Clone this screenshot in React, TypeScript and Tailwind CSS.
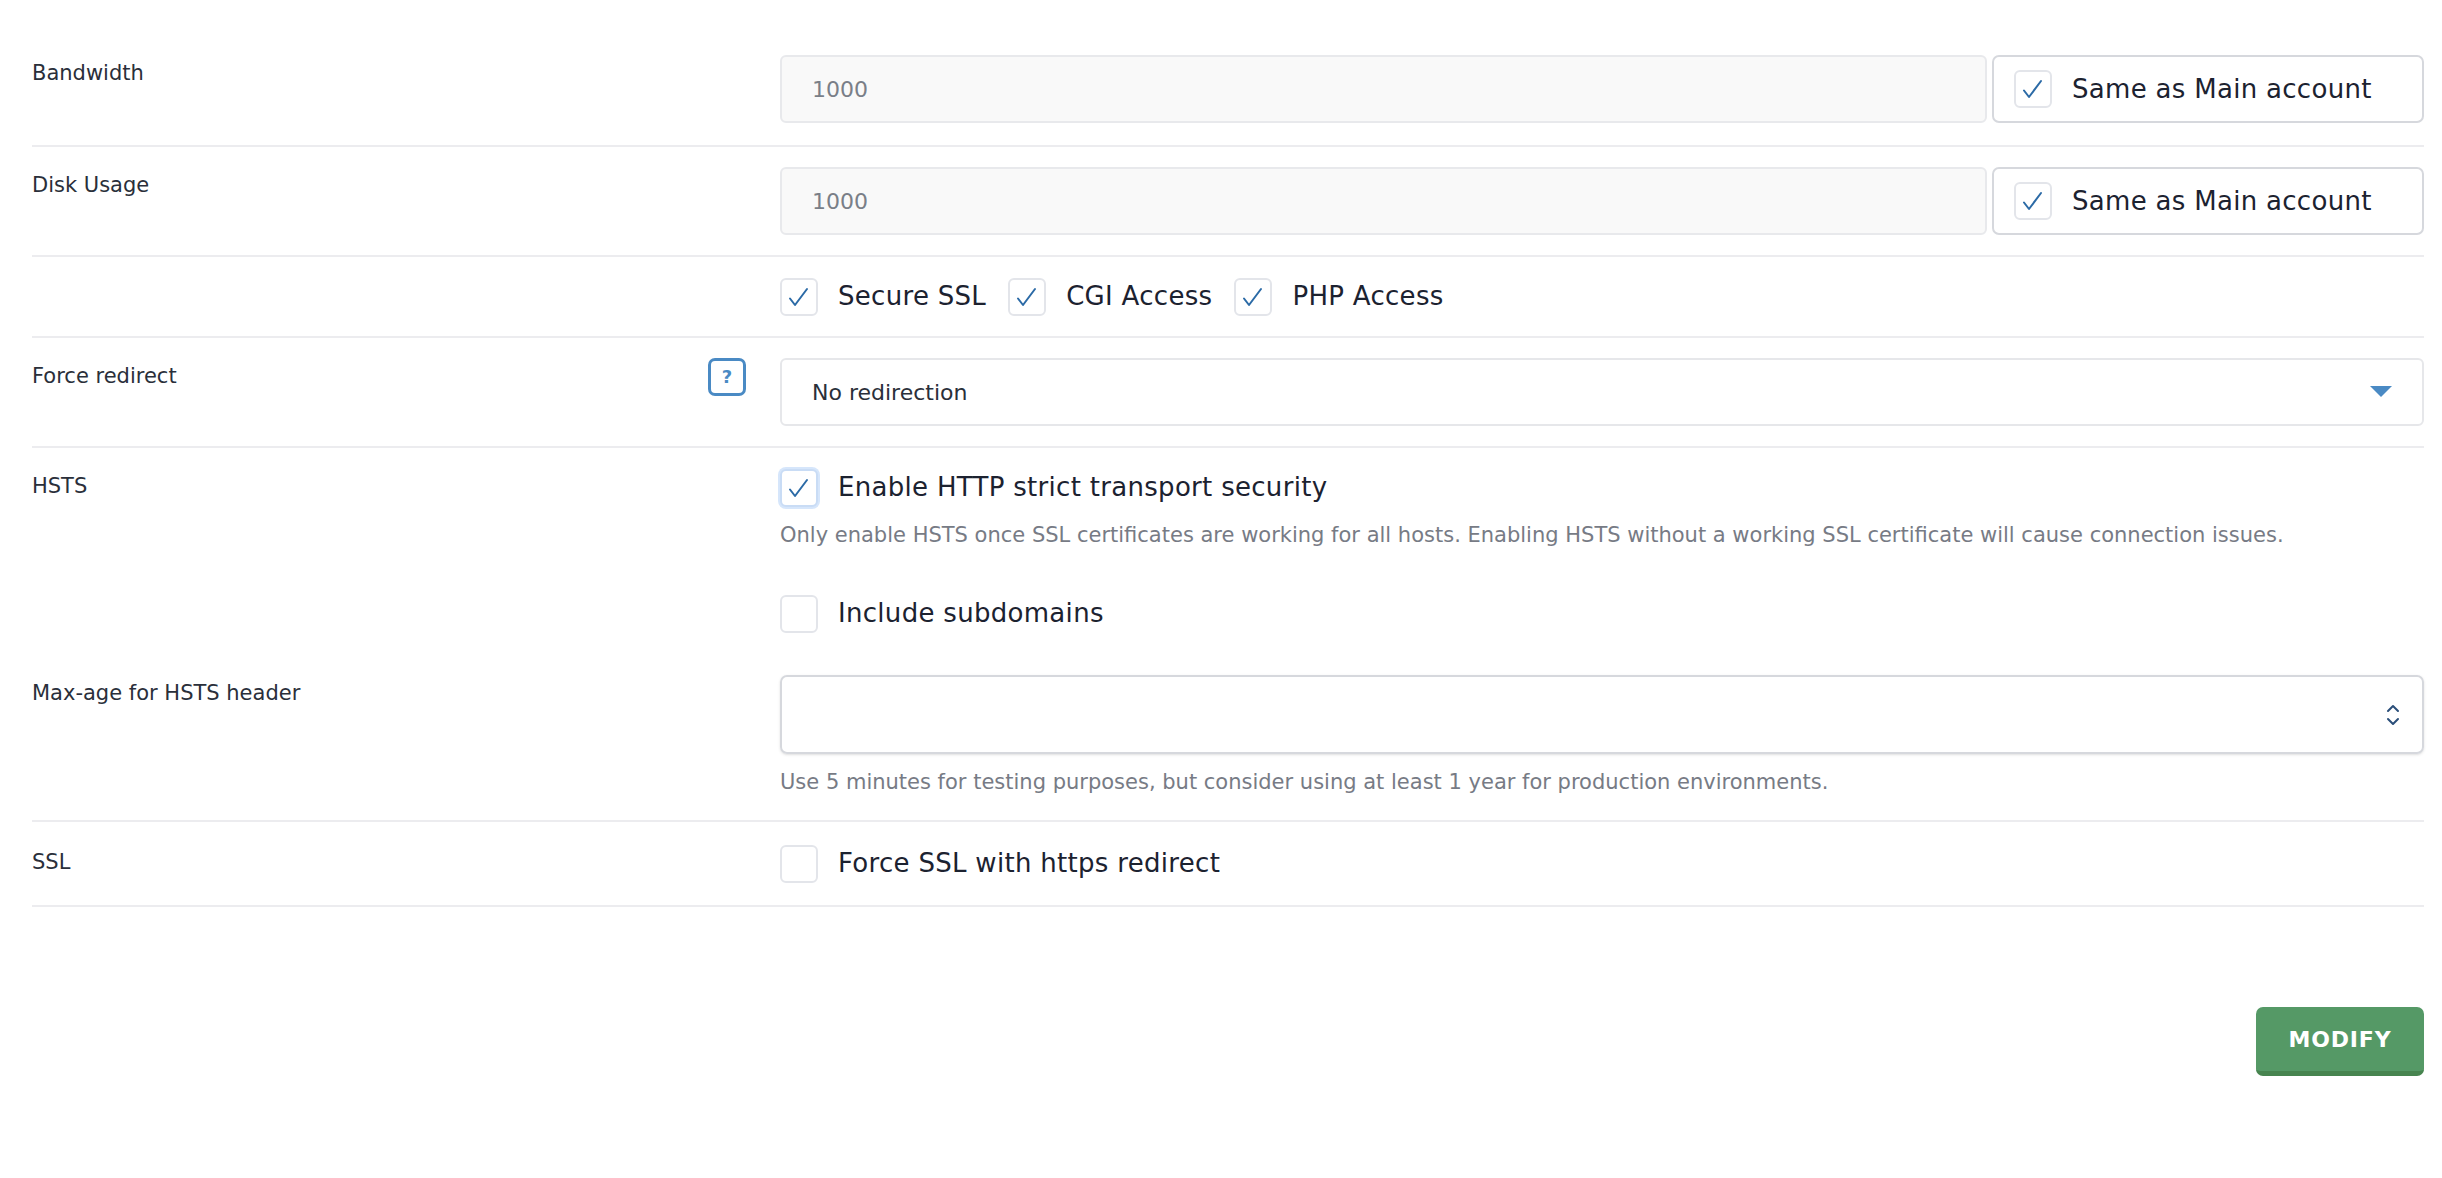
import React from 'react';

const font = { fontFamily: '"DejaVu Sans", "Open Sans", sans-serif' };

function Check({ checked = false, focus = false }: { checked?: boolean; focus?: boolean }) {
  return (
    <span
      className={`flex h-[38px] w-[38px] shrink-0 items-center justify-center rounded-[6px] border-2 bg-white ${
        focus ? 'border-[#c9dcf5] ring-2 ring-[#d6e6fb]' : 'border-[#e3e5ea]'
      }`}
    >
      {checked && (
        <svg width="24" height="24" viewBox="0 0 24 24" fill="none">
          <path d="M3 13.5 L8 20 L20 4" stroke="#2b6aa6" strokeWidth="2" strokeLinecap="round" strokeLinejoin="round" />
        </svg>
      )}
    </span>
  );
}

function CheckLabel({ label, checked, focus }: { label: string; checked?: boolean; focus?: boolean }) {
  return (
    <label className="flex items-center gap-[20px] text-[26px] text-[#1c2230] tracking-[0.3px]">
      <Check checked={checked} focus={focus} />
      {label}
    </label>
  );
}

function Row({ label, extra, children }: { label?: string; extra?: React.ReactNode; children: React.ReactNode }) {
  return (
    <div className="flex">
      <div className="flex w-[748px] shrink-0 items-start justify-between pt-[2px] text-[21px] leading-[32px] text-[#2a2f3a]">
        <span>{label}</span>
        {extra}
      </div>
      <div className="flex-1">{children}</div>
    </div>
  );
}

function SameAsBox({ value }: { value: string }) {
  return (
    <div className="flex h-[68px] gap-[5px]">
      <div className="flex flex-1 items-center rounded-[6px] border-2 border-[#e8e9ec] bg-[#f9f9f9] px-[30px] text-[22px] text-[#7a7f88]">
        {value}
      </div>
      <div className="flex w-[432px] items-center gap-[20px] rounded-[7px] border-2 border-[#d6d8dd] px-[20px] text-[26px] text-[#1c2230] tracking-[0.3px]">
        <Check checked />
        Same as Main account
      </div>
    </div>
  );
}

export default function App() {
  return (
    <div className="min-h-[1178px] bg-white pl-[32px] pr-[18px] pt-[33px]" style={font}>
      {/* Bandwidth */}
      <div className="py-[22px]">
        <Row label="Bandwidth">
          <SameAsBox value="1000" />
        </Row>
      </div>
      <div className="border-t-2 border-[#ececef] py-[20px]">
        <Row label="Disk Usage">
          <SameAsBox value="1000" />
        </Row>
      </div>

      {/* Access flags */}
      <div className="border-t-2 border-[#ececef] py-[20px]">
        <Row>
          <div className="flex items-center gap-[22px]">
            <CheckLabel label="Secure SSL" checked />
            <CheckLabel label="CGI Access" checked />
            <CheckLabel label="PHP Access" checked />
          </div>
        </Row>
      </div>

      {/* Force redirect */}
      <div className="border-t-2 border-[#ececef] py-[20px]">
        <Row
          label="Force redirect"
          extra={
            <span className="mr-[34px] mt-[-2px] flex h-[38px] w-[38px] items-center justify-center rounded-[7px] border-[3px] border-[#4a8ac4] text-[18px] font-bold text-[#4a8ac4]">
              ?
            </span>
          }
        >
          <div className="flex h-[68px] items-center justify-between rounded-[6px] border-2 border-[#e6e7ea] px-[30px] text-[22px] text-[#2a2f3a]">
            No redirection
            <svg width="22" height="12" viewBox="0 0 22 12">
              <path d="M0 0 H22 L11 11 Z" fill="#4a8ac4" />
            </svg>
          </div>
        </Row>
      </div>

      {/* HSTS */}
      <div className="border-t-2 border-[#ececef] pb-[22px] pt-[20px]">
        <Row label="HSTS">
          <CheckLabel label="Enable HTTP strict transport security" checked focus />
          <p className="mt-[10px] text-[21px] leading-[37px] text-[#777b85]">
            Only enable HSTS once SSL certificates are working for all hosts. Enabling HSTS without a working SSL certificate will cause connection issues.
          </p>
          <div className="mt-[40px]">
            <CheckLabel label="Include subdomains" />
          </div>
        </Row>
        <div className="mt-[42px]">
          <Row label="Max-age for HSTS header">
            <div className="flex h-[79px] items-center justify-end rounded-[7px] border-2 border-[#d6d8dd] px-[22px] shadow-sm">
              <svg width="14" height="22" viewBox="0 0 14 22" fill="none">
                <path d="M2 7 L7 2 L12 7 M2 15 L7 20 L12 15" stroke="#2b4f7a" strokeWidth="2" strokeLinecap="round" strokeLinejoin="round" />
              </svg>
            </div>
            <p className="mt-[12px] text-[21px] leading-[32px] text-[#777b85]">
              Use 5 minutes for testing purposes, but consider using at least 1 year for production environments.
            </p>
          </Row>
        </div>
      </div>

      {/* SSL */}
      <div className="border-y-2 border-[#ececef] py-[22px]">
        <Row label="SSL">
          <CheckLabel label="Force SSL with https redirect" />
        </Row>
      </div>

      <div className="flex justify-end pt-[100px]">
        <button className="h-[69px] w-[168px] rounded-[7px] border-b-[5px] border-[#47844f] bg-[#559966] text-[22px] font-bold tracking-[0.8px] text-white">
          MODIFY
        </button>
      </div>
    </div>
  );
}
